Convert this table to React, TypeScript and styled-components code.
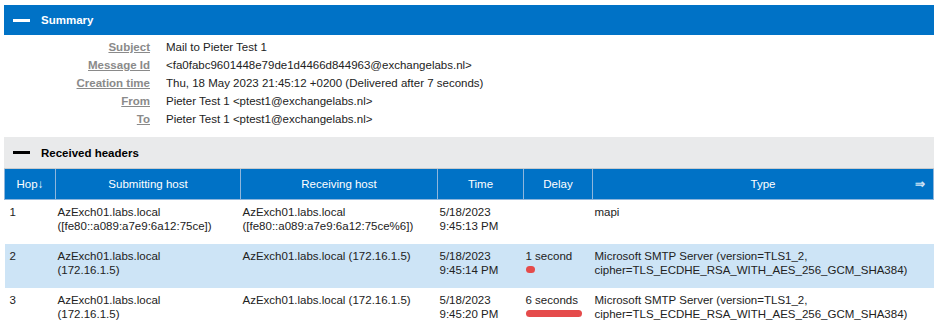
import React from "react"
import styled, { createGlobalStyle } from "styled-components"

const Colors = {
  blue: "#0072c6",
  blueLine: "#8fb6dc",
  gray: "#e9eaeb",
  grayLine: "#c9cbcd",
  label: "#8a8a8a",
  text: "#222222",
  highlight: "#cde4f6",
  bar: "#e54b4b",
}

const GlobalStyle = createGlobalStyle`
  body {
    margin: 0;
    background: #ffffff;
    font-family: "Liberation Sans", Arial, Helvetica, sans-serif;
    font-size: 11.5px;
    color: ${Colors.text};
  }
`

const Page = styled.div`
  width: 930px;
  padding: 5px 0 0 4px;
`

const SectionBar = styled.div<{ $dark?: boolean }>`
  display: flex;
  align-items: center;
  gap: 11px;
  height: ${(p) => (p.$dark ? "31px" : "30px")};
  padding-left: 9px;
  background: ${(p) => (p.$dark ? Colors.gray : Colors.blue)};
  color: ${(p) => (p.$dark ? "#000" : "#fff")};
  border-bottom: ${(p) => (p.$dark ? `1px solid ${Colors.grayLine}` : "none")};
  font-size: 11.5px;
  font-weight: bold;
`

const Collapse = styled.span<{ $dark?: boolean }>`
  display: block;
  width: 17px;
  height: 3px;
  background: ${(p) => (p.$dark ? "#000" : "#fff")};
`

const SummaryList = styled.div`
  display: grid;
  grid-template-columns: 146px auto;
  column-gap: 16px;
  padding: 3px 0 9px;
  line-height: 18px;
`

const Label = styled.span`
  text-align: right;
  color: ${Colors.label};
  font-weight: bold;
  text-decoration: underline;
`

const Value = styled.span`
  color: ${Colors.text};
`

const Table = styled.table`
  width: 930px;
  border-collapse: collapse;
  table-layout: fixed;
  font-size: 11.5px;
`

const Th = styled.th`
  height: 30px;
  padding: 0 2px;
  background: ${Colors.blue};
  color: #fff;
  font-weight: normal;
  text-align: center;
  border: 1px solid ${Colors.blueLine};
  border-top: none;
  position: relative;
`

const SortArrow = styled.span`
  position: absolute;
  right: 8px;
  top: 8px;
  font-size: 12px;
  font-weight: bold;
  color: #cfe3f5;
`

const Row = styled.tr<{ $active?: boolean }>`
  height: 44px;
  background: ${(p) => (p.$active ? Colors.highlight : "transparent")};
`

const Td = styled.td<{ $first?: boolean }>`
  vertical-align: top;
  padding: 5px 2px 0 ${(p) => (p.$first ? "5px" : "2px")};
  line-height: 14px;
  color: ${Colors.text};
`

const DelayBar = styled.div`
  height: 7px;
  margin-top: 3px;
  border-radius: 4px;
  background: ${Colors.bar};
`

const Fade = styled.div`
  height: 4px;
  margin-left: -4px;
  width: 940px;
  background: linear-gradient(180deg, #ffffff, #f1f1f1);
`

const summary = [
  ["Subject", "Mail to Pieter Test 1"],
  ["Message Id", "<fa0fabc9601448e79de1d4466d844963@exchangelabs.nl>"],
  ["Creation time", "Thu, 18 May 2023 21:45:12 +0200 (Delivered after 7 seconds)"],
  ["From", "Pieter Test 1 <ptest1@exchangelabs.nl>"],
  ["To", "Pieter Test 1 <ptest1@exchangelabs.nl>"],
]

const tls = ["Microsoft SMTP Server (version=TLS1_2,", "cipher=TLS_ECDHE_RSA_WITH_AES_256_GCM_SHA384)"]

const hops = [
  {
    hop: "1",
    from: ["AzExch01.labs.local", "([fe80::a089:a7e9:6a12:75ce])"],
    by: ["AzExch01.labs.local", "([fe80::a089:a7e9:6a12:75ce%6])"],
    time: ["5/18/2023", "9:45:13 PM"],
    delay: 0,
    type: ["mapi"],
  },
  {
    hop: "2",
    from: ["AzExch01.labs.local", "(172.16.1.5)"],
    by: ["AzExch01.labs.local (172.16.1.5)"],
    time: ["5/18/2023", "9:45:14 PM"],
    delay: 1,
    type: tls,
  },
  {
    hop: "3",
    from: ["AzExch01.labs.local", "(172.16.1.5)"],
    by: ["AzExch01.labs.local (172.16.1.5)"],
    time: ["5/18/2023", "9:45:20 PM"],
    delay: 6,
    type: tls,
  },
]

const Lines = ({ lines }: { lines: string[] }) => (
  <>
    {lines.map((l, i) => (
      <div key={i}>{l}</div>
    ))}
  </>
)

export default function App() {
  return (
    <Page>
      <GlobalStyle />
      <SectionBar>
        <Collapse />
        Summary
      </SectionBar>
      <SummaryList>
        {summary.map(([k, v]) => (
          <React.Fragment key={k}>
            <Label>{k}</Label>
            <Value>{v}</Value>
          </React.Fragment>
        ))}
      </SummaryList>
      <SectionBar $dark>
        <Collapse $dark />
        Received headers
      </SectionBar>
      <Table>
        <colgroup>
          <col style={{ width: 51 }} />
          <col style={{ width: 185 }} />
          <col style={{ width: 197 }} />
          <col style={{ width: 86 }} />
          <col style={{ width: 69 }} />
          <col />
        </colgroup>
        <thead>
          <tr>
            <Th>Hop↓</Th>
            <Th>Submitting host</Th>
            <Th>Receiving host</Th>
            <Th>Time</Th>
            <Th>Delay</Th>
            <Th>
              Type
              <SortArrow>⇒</SortArrow>
            </Th>
          </tr>
        </thead>
        <tbody>
          {hops.map((h, i) => (
            <Row key={h.hop} $active={i === 1}>
              <Td $first>{h.hop}</Td>
              <Td>
                <Lines lines={h.from} />
              </Td>
              <Td>
                <Lines lines={h.by} />
              </Td>
              <Td>
                <Lines lines={h.time} />
              </Td>
              <Td>
                {h.delay > 0 && (
                  <>
                    <div>{h.delay === 1 ? "1 second" : `${h.delay} seconds`}</div>
                    <DelayBar style={{ width: Math.round(h.delay * 9.4) }} />
                  </>
                )}
              </Td>
              <Td>
                <Lines lines={h.type} />
              </Td>
            </Row>
          ))}
        </tbody>
      </Table>
      <Fade />
    </Page>
  )
}
